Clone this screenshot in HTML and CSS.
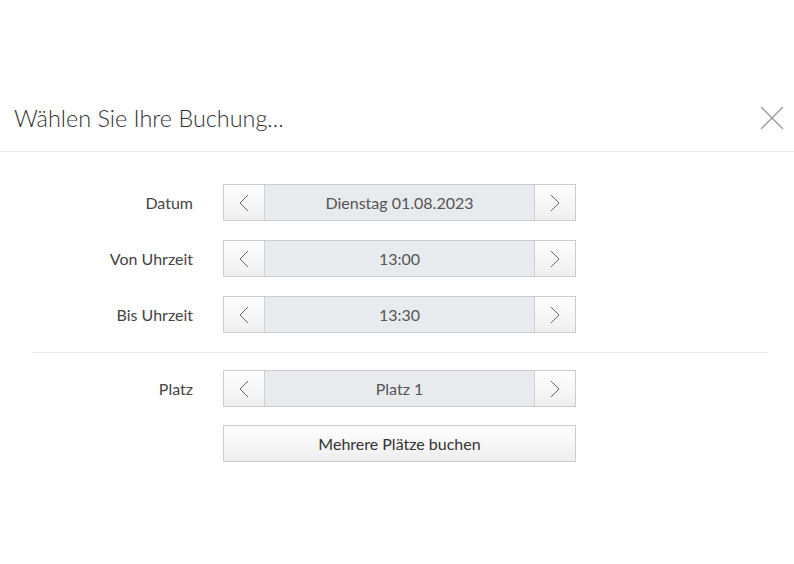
FILE: index.html
```html
<!DOCTYPE html>
<html lang="de">
<head>
<meta charset="utf-8">
<title>Buchung</title>
<link rel="stylesheet" href="styles.css">
</head>
<body>
<div class="modal">
  <div class="modal-header">
    <h1 class="modal-title">Wählen Sie Ihre Buchung...</h1>
    <button class="close" aria-label="Schließen">
      <svg width="24" height="24" viewBox="0 0 24 24"><path d="M1 1 L23 23 M23 1 L1 23" stroke="#9a9a9a" stroke-width="1.3" fill="none"/></svg>
    </button>
  </div>
  <div class="modal-body">
    <div class="row">
      <div class="label">Datum</div>
      <div class="stepper">
        <button class="step"><svg width="10" height="18" viewBox="0 0 10 18"><path d="M9 1 L1 9 L9 17" stroke="#666" stroke-width="1" fill="none"/></svg></button>
        <div class="value">Dienstag 01.08.2023</div>
        <button class="step"><svg width="10" height="18" viewBox="0 0 10 18"><path d="M1 1 L9 9 L1 17" stroke="#666" stroke-width="1" fill="none"/></svg></button>
      </div>
    </div>
    <div class="row">
      <div class="label">Von Uhrzeit</div>
      <div class="stepper">
        <button class="step"><svg width="10" height="18" viewBox="0 0 10 18"><path d="M9 1 L1 9 L9 17" stroke="#666" stroke-width="1" fill="none"/></svg></button>
        <div class="value">13:00</div>
        <button class="step"><svg width="10" height="18" viewBox="0 0 10 18"><path d="M1 1 L9 9 L1 17" stroke="#666" stroke-width="1" fill="none"/></svg></button>
      </div>
    </div>
    <div class="row">
      <div class="label">Bis Uhrzeit</div>
      <div class="stepper">
        <button class="step"><svg width="10" height="18" viewBox="0 0 10 18"><path d="M9 1 L1 9 L9 17" stroke="#666" stroke-width="1" fill="none"/></svg></button>
        <div class="value">13:30</div>
        <button class="step"><svg width="10" height="18" viewBox="0 0 10 18"><path d="M1 1 L9 9 L1 17" stroke="#666" stroke-width="1" fill="none"/></svg></button>
      </div>
    </div>
    <hr class="sep">
    <div class="row">
      <div class="label">Platz</div>
      <div class="stepper">
        <button class="step"><svg width="10" height="18" viewBox="0 0 10 18"><path d="M9 1 L1 9 L9 17" stroke="#666" stroke-width="1" fill="none"/></svg></button>
        <div class="value">Platz 1</div>
        <button class="step"><svg width="10" height="18" viewBox="0 0 10 18"><path d="M1 1 L9 9 L1 17" stroke="#666" stroke-width="1" fill="none"/></svg></button>
      </div>
    </div>
    <div class="row row-last">
      <div class="label"></div>
      <button class="wide">Mehrere Plätze buchen</button>
    </div>
  </div>
</div>
</body>
</html>
```

FILE: styles.css
```css
* { box-sizing: border-box; }
html, body {
  margin: 0;
  background: #fff;
  font-family: Lato, "Liberation Sans", sans-serif;
  color: #333;
}
.modal {
  width: 794px;
  padding-top: 94px;
}
.modal-header {
  display: flex;
  align-items: center;
  justify-content: space-between;
  height: 58px;
  padding: 0 10px 0 14px;
  border-bottom: 1px solid #e5e5e5;
}
.modal-title {
  margin: 0;
  font-size: 23.4px;
  font-weight: 300;
  color: #333;
  line-height: 1;
  position: relative;
  top: -4px;
}
.close {
  border: 0;
  background: none;
  padding: 0;
  width: 24px;
  height: 24px;
  position: relative;
  top: -5px;
}
.close svg { display: block; }
.modal-body {
  margin: 0 26px 0 32px;
  padding-top: 32px;
  display: flex;
  flex-direction: column;
  gap: 19px;
}
.row {
  display: flex;
  align-items: center;
  gap: 30px;
}
.row-last { margin-top: -1px; }
.label {
  width: 161px;
  text-align: right;
  font-size: 16px;
  color: #444;
}
.stepper {
  display: flex;
  width: 353px;
  height: 37px;
  border: 1px solid #ccc;
}
.step {
  width: 41px;
  flex: none;
  border: 0;
  padding: 0;
  margin: 0;
  background: linear-gradient(#ffffff, #efefef);
  display: flex;
  align-items: center;
  justify-content: center;
}
.step:first-child { border-right: 1px solid #d0d0d0; }
.step:last-child { border-left: 1px solid #d0d0d0; }
.step svg { display: block; }
.value {
  flex: 1;
  background: #e8ebee;
  display: flex;
  align-items: center;
  justify-content: center;
  font-size: 16px;
  color: #555;
}
.sep {
  margin: 0 0 -2px 0;
  width: 736px;
  border: 0;
  border-top: 1px solid #e5e5e5;
}
.wide {
  width: 353px;
  height: 37px;
  border: 1px solid #ccc;
  background: linear-gradient(#ffffff, #eeeeee);
  font-family: Lato, "Liberation Sans", sans-serif;
  font-size: 16px;
  color: #333;
  padding: 0;
  margin: 0;
}
```
